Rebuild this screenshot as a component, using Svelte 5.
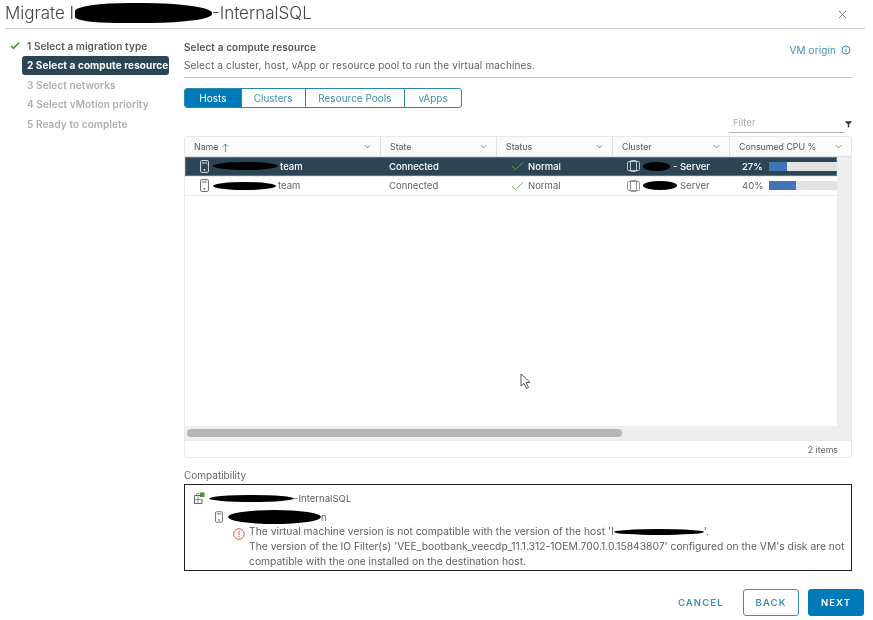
<script lang="ts">
  const steps = [
    { label: "1 Select a migration type", state: "done" },
    { label: "2 Select a compute resource", state: "active" },
    { label: "3 Select networks", state: "todo" },
    { label: "4 Select vMotion priority", state: "todo" },
    { label: "5 Ready to complete", state: "todo" },
  ];
  const tabs = ["Hosts", "Clusters", "Resource Pools", "vApps"];
  const columns = ["Name", "State", "Status", "Cluster", "Consumed CPU %"];
  const rows = [
    { blob: 65, suffix: "team", clusterBlob: 27, clusterText: "- Server", cpu: 27, selected: true },
    { blob: 63, suffix: "team", clusterBlob: 34, clusterText: "Server", cpu: 40, selected: false },
  ];
</script>

<div class="wizard">
  <header class="title-bar">
    <h1>Migrate I<span class="blob title-blob"></span>-InternalSQL</h1>
    <svg class="close" viewBox="0 0 10 10" width="9" height="9"><path d="M1 1l8 8M9 1l-8 8" stroke="#666" stroke-width="0.9" fill="none" /></svg>
  </header>

  <div class="main">
    <nav class="steps">
      {#each steps as step}
        <div class="step {step.state}">
          {#if step.state === "done"}
            <svg class="tick" viewBox="0 0 12 10" width="10" height="8"><path d="M1 5l3 3 7-7" stroke="#3f9a2c" stroke-width="2" fill="none" /></svg>
          {/if}
          <span>{step.label}</span>
        </div>
      {/each}
    </nav>

    <section class="content">
      <div class="content-head">
        <div>
          <h2>Select a compute resource</h2>
          <p>Select a cluster, host, vApp or resource pool to run the virtual machines.</p>
        </div>
        <div class="origin">
          VM origin
          <svg viewBox="0 0 10 10" width="10" height="10"><circle cx="5" cy="5" r="4" stroke="#2f8fb5" fill="none" /><path d="M5 4.2v3M5 2.4v1" stroke="#2f8fb5" /></svg>
        </div>
      </div>

      <div class="tabs">
        {#each tabs as tab, i}
          <div class="tab" class:on={i === 0}>{tab}</div>
        {/each}
      </div>

      <div class="filter-row">
        <div class="filter">Filter</div>
        <svg viewBox="0 0 10 10" width="7" height="8"><path d="M0.5 1h9v1.2L6 5.5V9.5H4V5.5L0.5 2.2z" fill="#333" /></svg>
      </div>

      <div class="table">
        <div class="thead">
          {#each columns as col, i}
            <div class="th">
              <span>{col}</span>
              {#if i === 0}
                <svg class="sort" viewBox="0 0 8 10" width="7" height="9"><path d="M4 10V1M1 4l3-3 3 3" stroke="#2f8fb5" fill="none" /></svg>
              {/if}
              <svg class="chev" viewBox="0 0 8 5" width="7" height="5"><path d="M1 1l3 3 3-3" stroke="#777" fill="none" /></svg>
            </div>
          {/each}
        </div>

        <div class="tbody">
          <div class="rows">
            {#each rows as row}
              <div class="row" class:selected={row.selected}>
                <div class="td name">
                  <svg class="host" viewBox="0 0 9 13" width="9" height="13"><rect x="0.6" y="0.6" width="7.8" height="11.8" rx="1" fill="none" stroke="currentColor" /><path d="M2 3h5" stroke="currentColor" /><rect x="3.6" y="9" width="1.6" height="1.6" fill="currentColor" /></svg>
                  <span class="blob" style="width:{row.blob}px"></span><span class="suffix">{row.suffix}</span>
                </div>
                <div class="td state">Connected</div>
                <div class="td status">
                  <svg viewBox="0 0 14 10" width="13" height="10"><path d="M1 5l4 4 8-8" stroke="#6aa84f" stroke-width="1" fill="none" /></svg>
                  Normal
                </div>
                <div class="td cluster">
                  <svg viewBox="0 0 13 12" width="13" height="12"><rect x="0.5" y="1.5" width="12" height="9" rx="1" fill="none" stroke="currentColor" stroke-width="0.8" /><rect x="3.5" y="0.5" width="6" height="11" rx="0.8" fill="none" stroke="currentColor" stroke-width="0.8" /></svg>
                  <span class="blob" style="width:{row.clusterBlob}px"></span><span>{row.clusterText}</span>
                </div>
                <div class="td cpu">
                  <span class="pct">{row.cpu}%</span>
                  <span class="meter"><span class="fill" style="width:{row.cpu}%"></span></span>
                </div>
              </div>
            {/each}
          </div>
          <div class="vscroll"></div>
        </div>

        <div class="hscroll"><div class="thumb"></div></div>
        <div class="tfoot">2 items</div>
      </div>

      <div class="compat-label">Compatibility</div>
      <div class="compat">
        <div class="compat-vm">
          <svg viewBox="0 0 12 12" width="12" height="12"><path d="M7 3.5H1.5v8H9V7" fill="none" stroke="#666" /><path d="M3.5 3.5V1.5H6M1.5 7.5H9M5 3.5v8" fill="none" stroke="#666" stroke-width="0.7" /><rect x="7" y="0.5" width="4.5" height="4.5" fill="#3f9a2c" /></svg>
          <span class="blob vm-blob"></span><span>-InternalSQL</span>
        </div>
        <div class="compat-host">
          <svg viewBox="0 0 9 13" width="8" height="12"><rect x="0.6" y="0.6" width="7.8" height="11.8" rx="1" fill="none" stroke="#666" /><path d="M2 3h5" stroke="#666" /><rect x="3.6" y="9" width="1.6" height="1.6" fill="#666" /></svg>
          <span class="blob host-blob"></span><span>n</span>
        </div>
        <div class="compat-msg">
          <svg viewBox="0 0 12 12" width="12" height="12"><circle cx="6" cy="6" r="5.3" fill="none" stroke="#d9614c" /><path d="M6 2.8v4.2M6 8v1.2" stroke="#d9614c" /></svg>
          <div class="msg-text">
            <div>The virtual machine version is not compatible with the version of the host 'I<span class="blob msg-blob"></span>'.</div>
            <div>The version of the IO Filter(s) 'VEE_bootbank_veecdp_11.1.312-1OEM.700.1.0.15843807' configured on the VM's disk are not</div>
            <div>compatible with the one installed on the destination host.</div>
          </div>
        </div>
      </div>
    </section>
  </div>

  <footer class="actions">
    <button class="btn link">CANCEL</button>
    <button class="btn outline">BACK</button>
    <button class="btn solid">NEXT</button>
  </footer>

  <svg class="cursor" viewBox="0 0 12 17" width="12" height="17"><path d="M1 1v12l3-2.5 2.5 5 2-1-2.5-4.8 4-.4z" fill="#fff" stroke="#444" stroke-width="0.9" /></svg>
</div>

<style>
  * {
    box-sizing: border-box;
  }
  :global(body) {
    background: #fff;
  }
  .wizard {
    position: relative;
    width: 873px;
    height: 620px;
    overflow: hidden;
    padding: 0 8px 0 5px;
    background: #fff;
    color: #565656;
    font-family: Inter, "Liberation Sans", sans-serif;
    font-size: 10px;
    filter: blur(0.35px);
  }

  .title-bar {
    display: flex;
    align-items: center;
    justify-content: space-between;
    height: 29px;
    padding: 0 18px 2px 0;
    border-bottom: 1px solid #c9c9c9;
  }
  h1 {
    display: flex;
    align-items: center;
    margin: 0;
    font-size: 17px;
    font-weight: 300;
    color: #444;
  }
  .blob {
    display: inline-block;
    height: 9px;
    background: #000;
    border-radius: 50%;
    vertical-align: middle;
  }
  .title-blob {
    width: 137px;
    height: 20px;
    margin-left: 1px;
    border-radius: 40% 50% 45% 30%;
  }
  .close {
    margin-top: 2px;
  }

  .main {
    display: flex;
  }
  .steps {
    width: 179px;
    padding: 7px 0 0 5px;
    display: flex;
    flex-direction: column;
    font-weight: 600;
    font-size: 10px;
    letter-spacing: 0.09px;
  }
  .step {
    position: relative;
    height: 19.5px;
    margin-left: 12px;
    padding-left: 5px;
    width: 147px;
    display: flex;
    align-items: center;
    white-space: nowrap;
    border-radius: 3px;
  }
  .step.done {
    color: #5a5a5a;
  }
  .step.active {
    background: #2b4555;
    color: #fff;
    font-weight: 700;
  }
  .step.todo {
    color: #adadad;
  }
  .tick {
    position: absolute;
    left: -12px;
    top: 6px;
  }

  .content {
    flex: 1;
    padding-top: 12px;
    padding-right: 13px;
  }
  .content-head {
    display: flex;
    justify-content: space-between;
    border-bottom: 1px solid #c4c4c4;
    height: 37px;
  }
  h2 {
    margin: 0 0 5px;
    font-size: 10px;
    line-height: 13px;
    font-weight: 600;
    color: #555;
    letter-spacing: 0.12px;
  }
  p {
    margin: 0;
    font-size: 10px;
    line-height: 13px;
    color: #5f5f5f;
    letter-spacing: 0.15px;
  }
  .origin {
    display: flex;
    align-items: center;
    gap: 5px;
    height: 14px;
    margin: 2px 1px 0 0;
    color: #3d8fb0;
    font-size: 10px;
    letter-spacing: 0.1px;
  }

  .tabs {
    display: flex;
    width: 278px;
    height: 20px;
    margin-top: 10px;
    border: 1px solid #2e86ad;
    border-radius: 3px;
    overflow: hidden;
  }
  .tab {
    display: flex;
    align-items: center;
    justify-content: center;
    color: #3d8fb0;
    font-size: 10px;
    border-left: 1px solid #2e86ad;
  }
  .tab:nth-child(1) { width: 56px; border-left: 0; }
  .tab:nth-child(2) { width: 64px; }
  .tab:nth-child(3) { width: 100px; }
  .tab:nth-child(4) { width: 57px; }
  .tab.on {
    background: #0079b8;
    color: #fff;
  }

  .filter-row {
    display: flex;
    align-items: center;
    justify-content: flex-end;
    gap: 0;
    height: 25px;
    padding-top: 7px;
  }
  .filter {
    width: 116px;
    height: 17px;
    padding: 1px 0 0 4px;
    border-bottom: 1px solid #b0b0b0;
    color: #aaa;
    font-size: 9.5px;
  }

  .table {
    height: 322px;
    display: flex;
    flex-direction: column;
    margin-top: 3px;
    border: 1px solid #e8e8e8;
    border-radius: 3px;
  }
  .thead {
    display: grid;
    grid-template-columns: 195px 116px 116px 117px 1fr;
    height: 20px;
    background: #fafafa;
    border-bottom: 1px solid #dedede;
  }
  .th {
    display: flex;
    align-items: center;
    gap: 4px;
    padding: 0 9px;
    border-left: 1px solid #e0e0e0;
    font-size: 8.8px;
    color: #555;
  }
  .th:first-child {
    border-left: 0;
  }
  .chev {
    margin-left: auto;
  }
  .sort {
    margin-top: 1px;
  }

  .tbody {
    flex: 1;
    display: flex;
    min-height: 0;
  }
  .rows {
    flex: 1;
  }
  .row {
    display: grid;
    grid-template-columns: 195px 116px 116px 117px 1fr;
    height: 19.5px;
    border-bottom: 1px solid #ececec;
    color: #5f5f5f;
    font-size: 9.5px;
    overflow: hidden;
  }
  .row.selected {
    background: #2b4555;
    color: #fff;
    font-weight: 500;
    box-shadow: inset 0 0 0 1px #3a7fa3;
  }
  .td {
    display: flex;
    align-items: center;
    white-space: nowrap;
    min-width: 0;
  }
  .name {
    padding-left: 15px;
  }
  .host {
    margin-right: 4px;
    color: #666;
  }
  .row.selected .host {
    color: #dfe6ea;
  }
  .name .blob {
    height: 8px;
  }
  .suffix {
    margin-left: 2px;
  }
  .state {
    padding-left: 9px;
  }
  .status {
    padding-left: 15px;
    gap: 4px;
  }
  .cluster {
    padding-left: 15px;
    gap: 3px;
  }
  .cluster svg {
    color: #777;
    flex: none;
  }
  .row.selected .cluster svg {
    color: #dfe6ea;
  }
  .cpu {
    padding-left: 13px;
    overflow: hidden;
  }
  .pct {
    width: 27px;
    flex: none;
  }
  .meter {
    display: block;
    flex: none;
    width: 68px;
    height: 9px;
    background: #e2e2e2;
  }
  .fill {
    display: block;
    height: 100%;
    background: #3f74b8;
  }
  .vscroll {
    width: 14px;
    background: #eeeeee;
  }
  .hscroll {
    height: 14px;
    padding: 3px 0 0 2px;
    background: #eeeeee;
  }
  .thumb {
    width: 435px;
    height: 8px;
    background: #b6b6b6;
    border-radius: 4px;
  }
  .tfoot {
    height: 17px;
    display: flex;
    align-items: center;
    justify-content: flex-end;
    padding-right: 13px;
    font-size: 8.8px;
    color: #666;
    border-top: 1px solid #e8e8e8;
  }

  .compat-label {
    margin-top: 11px;
    height: 15px;
    line-height: 13px;
    font-size: 10px;
    color: #666;
  }
  .compat {
    height: 87px;
    border: 1px solid #222;
    padding: 6px 0 0 8px;
    font-size: 9.6px;
    line-height: 15px;
    color: #5f5f5f;
    overflow: hidden;
  }
  .compat-vm {
    display: flex;
    align-items: center;
    height: 14px;
  }
  .vm-blob {
    width: 85px;
    height: 7px;
    margin-left: 4px;
  }
  .compat-host {
    display: flex;
    align-items: center;
    height: 16px;
    margin: 4px 0 0 22px;
  }
  .host-blob {
    width: 93px;
    height: 14px;
    margin-left: 5px;
  }
  .compat-msg {
    display: flex;
    gap: 4px;
    margin: -1px 0 0 40px;
  }
  .compat-msg svg {
    flex: none;
    margin-top: 4px;
  }
  .msg-blob {
    width: 90px;
    height: 6px;
  }
  .msg-text {
    white-space: nowrap;
    font-size: 10.3px;
  }

  .actions {
    display: flex;
    justify-content: flex-end;
    align-items: center;
    gap: 9px;
    margin-top: 18px;
    padding-right: 1px;
  }
  .btn {
    width: 56px;
    height: 27px;
    border-radius: 3px;
    font-family: inherit;
    font-size: 9.5px;
    font-weight: 600;
    letter-spacing: 1.1px;
    padding: 0;
  }
  .link {
    width: 44px;
    margin-right: 12px;
    border: 0;
    background: none;
    color: #3d8fb0;
  }
  .outline {
    border: 1px solid #3d8fb0;
    background: #fff;
    color: #3d8fb0;
  }
  .solid {
    border: 1px solid #0079b8;
    background: #0079b8;
    color: #fff;
  }

  .cursor {
    position: absolute;
    left: 520px;
    top: 373px;
  }
</style>
